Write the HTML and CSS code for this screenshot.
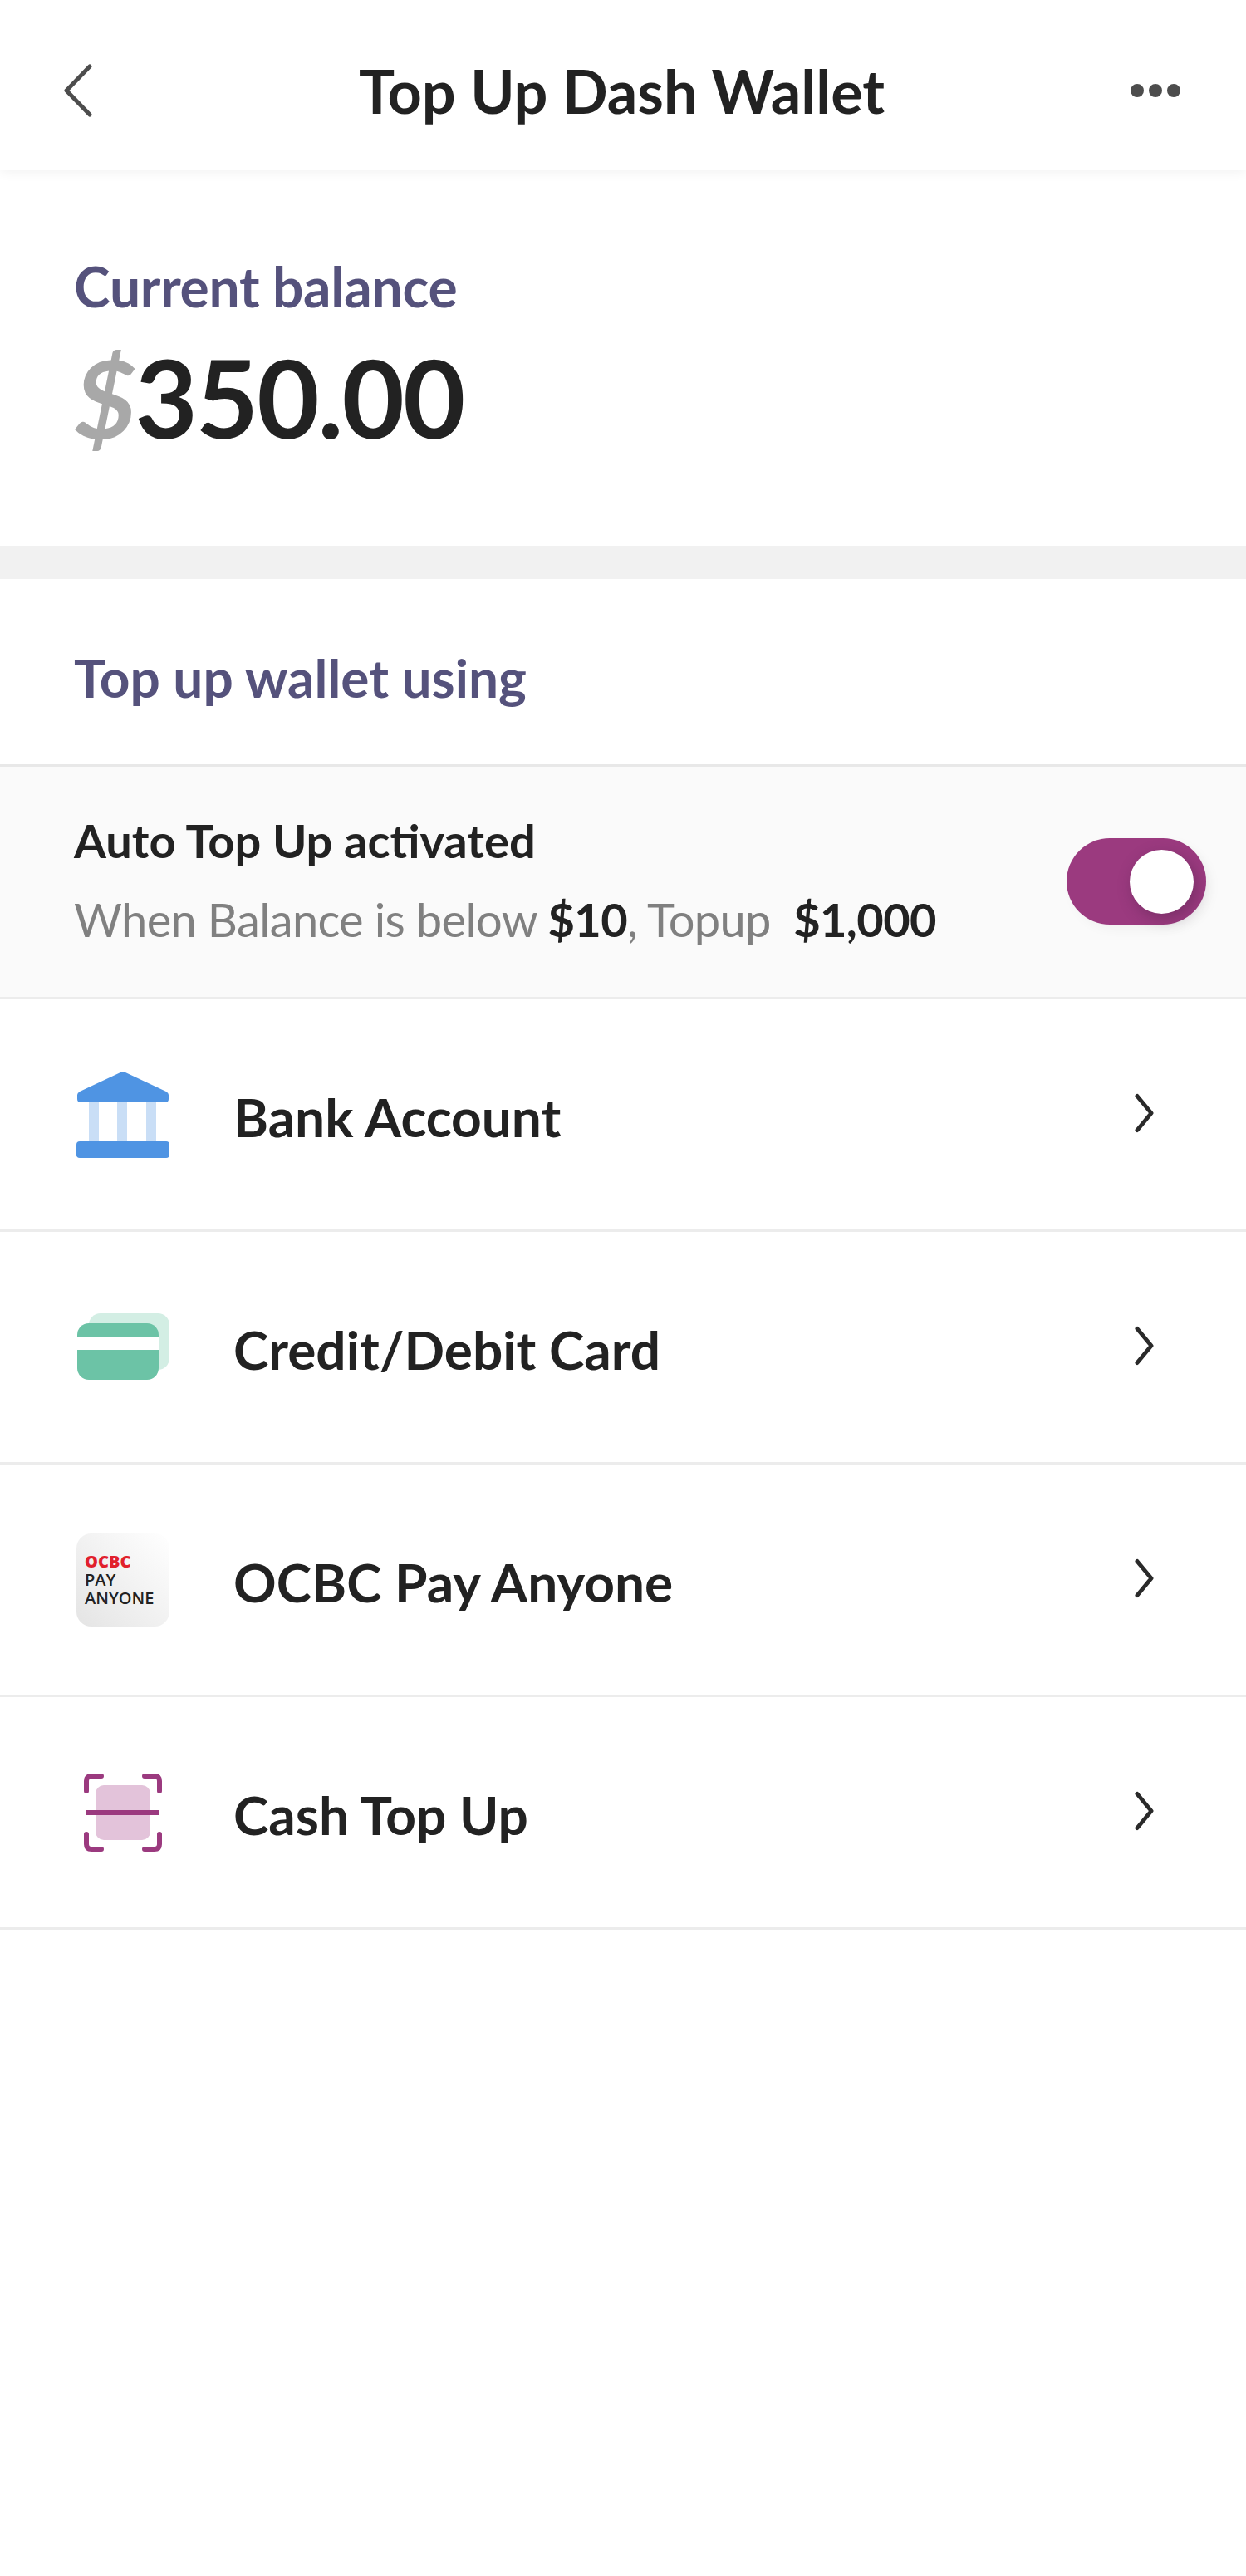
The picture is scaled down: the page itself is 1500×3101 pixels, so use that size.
FILE: index.html
```html
<!DOCTYPE html>
<html lang="en">
<head>
  <meta charset="UTF-8" />
  <meta name="viewport" content="width=device-width, initial-scale=1.0" />
  <title>Top Up Dash Wallet</title>
  <link rel="stylesheet" href="styles.css">
</head>
<body>
  <header class="topbar">
    <svg class="back-icon" viewBox="0 0 36 64" fill="none">
      <path d="M32 3 L4 32 L32 61" />
    </svg>
    <h1>Top Up Dash Wallet</h1>
    <div class="more-icon"><span></span><span></span><span></span></div>
  </header>

  <section class="balance">
    <div class="section-label">Current balance</div>
    <div class="amount"><span class="currency">$</span>350.00</div>
  </section>

  <section class="methods">
    <div class="section-label methods-title">Top up wallet using</div>

    <div class="auto-row">
      <div class="auto-copy">
        <div class="auto-title">Auto Top Up activated</div>
        <div class="auto-text">When Balance is below <b>$10</b>, Topup&nbsp; <b>$1,000</b></div>
      </div>
      <div class="toggle"><div class="knob"></div></div>
    </div>

    <div class="method-row">
      <svg class="method-icon" viewBox="0 0 112 112">
        <rect x="15" y="41" width="12" height="47" fill="#c9def6" />
        <rect x="49" y="41" width="12" height="47" fill="#c9def6" />
        <rect x="84" y="41" width="12" height="47" fill="#c9def6" />
        <path d="M53 5 Q56 3.500 59 5 L108 28 Q111 30 111 32 L111 37 Q111 41 107 41 L5 41 Q1 41 1 37 L1 32 Q1 30 4 28 Z" fill="#4f94e3" />
        <rect x="0" y="88" width="112" height="20" rx="4" fill="#4f94e3" />
      </svg>
      <span class="method-name">Bank Account</span>
      <svg class="chevron" viewBox="0 0 24 48" fill="none"><path d="M3 3.500 L20 24 L3 44.500" /></svg>
    </div>

    <div class="method-row">
      <svg class="method-icon" viewBox="0 0 112 112">
        <rect x="15" y="15" width="97" height="68" rx="14" fill="#d3eee4" />
        <rect x="1" y="27" width="98" height="68" rx="14" fill="#6cc3a6" />
        <rect x="1" y="43" width="98" height="16" fill="#fff" />
      </svg>
      <span class="method-name">Credit/Debit Card</span>
      <svg class="chevron" viewBox="0 0 24 48" fill="none"><path d="M3 3.500 L20 24 L3 44.500" /></svg>
    </div>

    <div class="method-row">
      <div class="ocbc-logo">
        <span class="ocbc-red">OCBC</span>
        <span>PAY</span>
        <span>ANYONE</span>
      </div>
      <span class="method-name">OCBC Pay Anyone</span>
      <svg class="chevron" viewBox="0 0 24 48" fill="none"><path d="M3 3.500 L20 24 L3 44.500" /></svg>
    </div>

    <div class="method-row">
      <svg class="method-icon" viewBox="0 0 112 112">
        <rect x="23" y="23" width="66" height="66" rx="10" fill="#e3c3da" />
        <path d="M12 30 V18 Q12 12 18 12 H30 M82 12 H94 Q100 12 100 18 V30 M100 82 V94 Q100 100 94 100 H82 M30 100 H18 Q12 100 12 94 V82" fill="none" stroke="#9b3a7f" stroke-width="6" stroke-linecap="round" />
        <rect x="12" y="53" width="88" height="6" fill="#9b3a7f" />
      </svg>
      <span class="method-name">Cash Top Up</span>
      <svg class="chevron" viewBox="0 0 24 48" fill="none"><path d="M3 3.500 L20 24 L3 44.500" /></svg>
    </div>
  </section>
</body>
</html>
```

FILE: styles.css
```css
* {
  margin: 0;
  padding: 0;
  box-sizing: border-box;
}

body {
  font-family: Lato, 'Liberation Sans', sans-serif;
  background: #fff;
  color: #222;
  min-height: 3101px;
}

.topbar {
  height: 205px;
  display: flex;
  align-items: center;
  padding: 12px 79px 0 76px;
  box-shadow: 0 2px 14px rgba(0, 0, 0, 0.06);
  position: relative;
}

.topbar h1 {
  flex: 1;
  text-align: center;
  font-size: 72px;
  font-weight: 700;
}

.back-icon {
  width: 36px;
  height: 64px;
  margin-right: 24px;
}

.back-icon path {
  stroke: #4d4d4d;
  stroke-width: 5;
  stroke-linecap: round;
  stroke-linejoin: round;
}

.more-icon {
  display: flex;
  gap: 6px;
}

.more-icon span {
  width: 16px;
  height: 16px;
  border-radius: 50%;
  background: #4d4d4d;
}

.balance {
  height: 452px;
  padding: 100px 89px 0;
}

.section-label {
  font-size: 66px;
  font-weight: 700;
  color: #55527c;
  letter-spacing: -0.3px;
}

.amount {
  font-size: 130px;
  font-weight: 700;
  line-height: 150px;
  letter-spacing: -2px;
  margin-top: 19px;
}

.currency {
  color: #a8a8a8;
  font-style: italic;
}

.methods {
  border-top: 40px solid #f1f1f1;
}

.methods-title {
  height: 226px;
  padding: 80px 0 0 89px;
  font-size: 64px;
  letter-spacing: 0;
  border-bottom: 3px solid #e8e8e8;
}

.auto-row {
  height: 280px;
  background: #fafafa;
  display: flex;
  align-items: center;
  justify-content: space-between;
  padding: 0 48px 0 89px;
  border-bottom: 3px solid #ececec;
}

.auto-copy {
  padding-bottom: 5px;
}

.auto-title {
  font-size: 56px;
  font-weight: 700;
}

.auto-text {
  font-size: 56px;
  color: #808080;
  letter-spacing: -0.65px;
  margin-top: 28px;
}

.auto-text b {
  color: #222;
}

.toggle {
  width: 168px;
  height: 104px;
  border-radius: 52px;
  background: #9b3a7f;
  display: flex;
  align-items: center;
  justify-content: flex-end;
  padding-right: 15px;
  margin-bottom: 1px;
  box-shadow: 6px 6px 14px rgba(0, 0, 0, 0.04);
}

.knob {
  width: 77px;
  height: 77px;
  border-radius: 50%;
  background: #fff;
  box-shadow: 4px 6px 18px rgba(60, 30, 60, 0.35);
}

.method-row {
  height: 280px;
  display: flex;
  align-items: center;
  padding-left: 92px;
  border-bottom: 3px solid #ececec;
}

.method-icon {
  width: 112px;
  height: 112px;
  flex-shrink: 0;
}

.ocbc-logo {
  width: 112px;
  height: 112px;
  flex-shrink: 0;
  border-radius: 18px;
  background: linear-gradient(45deg, #e4e4e4, #fff);
  display: flex;
  flex-direction: column;
  justify-content: center;
  padding-left: 10px;
  font-family: 'Open Sans', sans-serif;
  font-size: 20px;
  font-weight: 600;
  line-height: 22px;
  color: #222;
}

.ocbc-red {
  color: #e1202c;
  font-weight: 800;
}

.method-name {
  flex: 1;
  font-size: 64px;
  font-weight: 700;
  margin-left: 77px;
  padding-top: 6px;
}

.chevron {
  width: 24px;
  height: 48px;
  margin: 0 110px 3px 0;
}

.chevron path {
  stroke: #2a2a2a;
  stroke-width: 5;
  stroke-linecap: round;
  stroke-linejoin: round;
}
```
